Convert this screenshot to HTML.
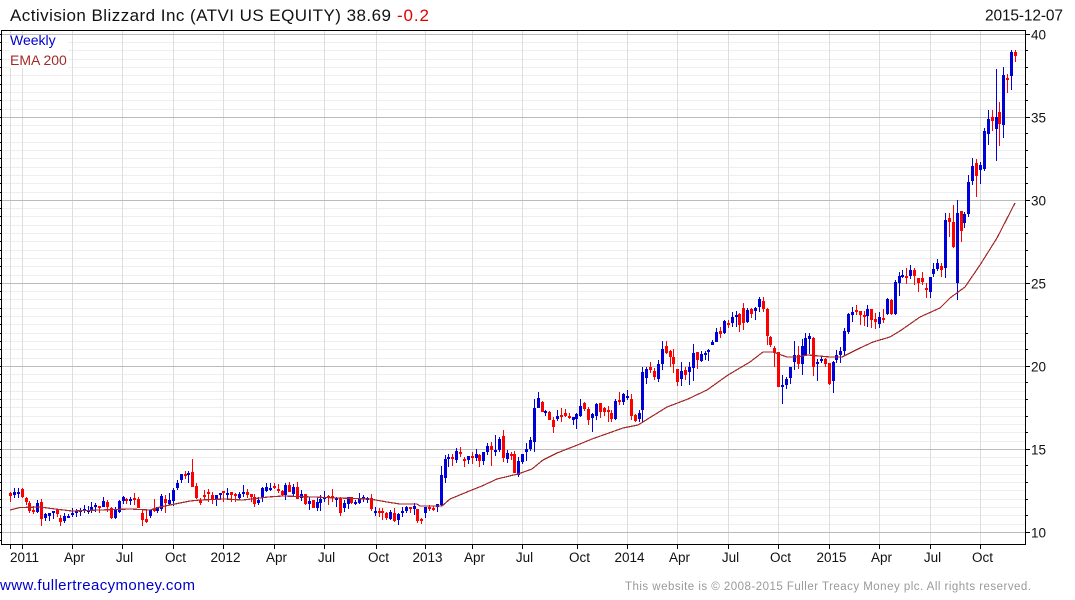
<!DOCTYPE html>
<html lang="en">
<head>
<meta charset="utf-8">
<title>Activision Blizzard Inc (ATVI US EQUITY)</title>
<style>
html,body{margin:0;padding:0;background:#fff;width:1075px;height:600px;overflow:hidden}
svg{display:block;position:absolute;left:0;top:0}
text{font-family:"Liberation Sans",Arial,sans-serif}
</style>
</head>
<body>
<svg id="c" width="1075" height="600" viewBox="0 0 1075 600" xmlns="http://www.w3.org/2000/svg">
<g id="grid" shape-rendering="crispEdges"></g>
<rect x="10" y="36" width="58" height="32" fill="#fff"/>
<path id="blue" fill="#0000d8" shape-rendering="crispEdges" d=""/>
<path id="red" fill="#ff0000" shape-rendering="crispEdges" d=""/>
<polyline fill="none" stroke="#a52a2a" stroke-width="1.2" shape-rendering="crispEdges" points="10,510 20,507.5 40,507 55,509 72,511 100,510 130,509 150,510 160,507 190,501 200,500 225,499 243,500 268,497 283,496 313,497 338,498 370,499 387,502 400,504 417,504 420,506 442,506 450,499 467,492 482,486 497,479 518,474 532,469 543,460 557,453 580,444 592,439 623,428 638,425 667,407 688,399 707,390 728,375 750,362 763,352 773,352 787,357 797,357 808,355 830,357 842,357 860,348 873,342 890,337 900,331 910,324 920,317 940,308 950,298 965,287 980,265 997,238 1015,203"/>
<g id="frame" shape-rendering="crispEdges"></g>
<text x="10" y="21" font-size="17" fill="#111" textLength="381" lengthAdjust="spacing">Activision Blizzard Inc (ATVI US EQUITY) 38.69</text>
<text x="397" y="21" font-size="17" fill="#e00000" textLength="32" lengthAdjust="spacing">-0.2</text>
<text x="985" y="20.5" font-size="15.5" fill="#111" textLength="78" lengthAdjust="spacing">2015-12-07</text>
<text x="10" y="45" font-size="14" fill="#0000cc">Weekly</text>
<text x="10" y="65" font-size="14" fill="#a52a2a">EMA 200</text>
<g font-size="13.5" fill="#111">
<text x="1031" y="39.5">40</text>
<text x="1031" y="122.5">35</text>
<text x="1031" y="205.5">30</text>
<text x="1031" y="288.5">25</text>
<text x="1031" y="371.5">20</text>
<text x="1031" y="454.5">15</text>
<text x="1031" y="537.5">10</text>
</g>
<g font-size="13.5" fill="#111" text-anchor="middle">
<text x="24.5" y="562">2011</text>
<text x="74.5" y="562">Apr</text>
<text x="124.5" y="562">Jul</text>
<text x="175.5" y="562">Oct</text>
<text x="225.5" y="562">2012</text>
<text x="276.5" y="562">Apr</text>
<text x="326.5" y="562">Jul</text>
<text x="378.5" y="562">Oct</text>
<text x="427.5" y="562">2013</text>
<text x="474.5" y="562">Apr</text>
<text x="524.5" y="562">Jul</text>
<text x="579.5" y="562">Oct</text>
<text x="629.5" y="562">2014</text>
<text x="679.5" y="562">Apr</text>
<text x="730.5" y="562">Jul</text>
<text x="780.5" y="562">Oct</text>
<text x="831.5" y="562">2015</text>
<text x="881.5" y="562">Apr</text>
<text x="932.5" y="562">Jul</text>
<text x="982.5" y="562">Oct</text>
</g>
<text x="0" y="590" font-size="15" fill="#0000cc" textLength="195" lengthAdjust="spacing">www.fullertreacymoney.com</text>
<text x="625" y="590" font-size="11.5" fill="#999" textLength="406" lengthAdjust="spacing">This website is © 2008-2015 Fuller Treacy Money plc. All rights reserved.</text>
</svg>
<script>
(function(){
var gx=[10,22,72,122,173,223,274,324,376,425,472,522,577,627,677,728,778,829,879,930,980];
var s='';
function line(x1,y1,x2,y2,c){s+='<line x1="'+x1+'" y1="'+y1+'" x2="'+x2+'" y2="'+y2+'" stroke="'+c+'" stroke-width="1"/>';}
function ry(i){return Math.floor(34.3+i*8.3)+0.5;}
var i,y;
for(i=0;i<=60;i++){y=ry(i);if(i%10)line(2,y,1025,y,'#eeeeee');}
gx.forEach(function(x){line(x+.5,31,x+.5,544,'#dddddd');});
for(i=0;i<=60;i+=10){y=ry(i);line(2,y,1025,y,'#bbbbbb');}
document.getElementById('grid').innerHTML=s;
s='';
line(1.5,30.5,1025.5,30.5,'#000');
line(1.5,30,1.5,545,'#000');
line(1025.5,30,1025.5,545,'#000');
line(1.5,544.5,1025.5,544.5,'#000');
for(i=0;i<=61;i++){y=ry(i);if(y<544)line(0,y,1,y,'#000');if(i%2==0&&y<544)line(1026,y,i%10==0?1030:1028,y,'#000');}
gx.forEach(function(x){line(x+.5,545,x+.5,549,'#000');});
document.getElementById('frame').innerHTML=s;
var groups=[
[0,450,"r125,155,128,138 b113,143,125,135 b113,143,125,128 r115,143,117,140 r140,165,143,155 r152,188,160,183 r168,193,180,185 b150,190,158,185 r148,228,156,207 b190,212,192,205 b190,212,190,198 b183,207,183,186 r178,200,180,192 r195,228,203,215 b190,220,197,212 b192,205,197,198 b175,200,190,195 b177,200,183,187 b175,198,180,187 b165,190,178,183 b168,192,180,182 b155,190,170,180 b160,185,165,172 r168,188,168,175 b142,170,152,170 r150,185,155,172 r172,208,175,205 b172,208,178,203 b150,188,153,185 b138,162,142,152 r145,162,147,150 b142,165,148,150 r130,165,145,150 r142,175,147,173 r180,228,188,210 r180,218,207,215 b180,205,180,198 r148,185,177,180 b170,190,172,182 b132,182,138,178 r135,188,148,158 b128,165,150,162 b115,168,120,152 b90,120,98,113 b72,100,73,90 r62,88,71,73 b62,98,68,73 r28,112,67,110 r100,148,108,145 r145,165,150,158 r120,150,135,137 r118,155,125,132 r125,162,135,150 b135,168,135,148 b128,148,130,135 r122,155,122,130 b115,150,130,132 r125,155,125,135 r128,155,132,138 b125,150,132,145 b105,140,127,130 r118,145,125,135 r132,155,132,142 r132,170,140,162 b140,165,150,158 b112,155,113,145 b100,125,112,122 b98,122,114,117 r100,118,108,110 r102,130,117,123 r120,138,122,135 b100,150,105,135 r97,125,105,125 b102,138,112,132 r97,148,112,148"],
[75,440,"b150,183,162,173 r162,195,162,191 b170,210,183,192 r180,205,180,205 b175,212,185,205 b165,213,178,190 b152,187,170,175 r165,195,169,172 r147,185,169,172 b172,200,175,177 r172,228,175,220 b180,215,190,205 b170,208,172,193 r172,192,172,190 b180,195,186,188 b160,192,175,188 b165,187,172,177 b172,188,175,177 r162,213,175,208 b200,228,212,214 r205,230,212,214 r203,240,212,216 r215,240,218,235 b210,240,215,236 r203,245,220,242 b220,255,222,240"],
[101,380,"b380,410,392,395 b378,398,380,393 r380,398,381,385 b370,405,378,388 r388,430,388,422 r415,432,417,419 b380,415,380,398 r375,393,380,387 r378,392,383,385 b372,395,372,382 b258,378,285,375 b225,310,236,295 b222,262,232,235 r222,257,232,235 b205,250,212,240 r202,232,215,220 r232,262,236,238 b228,252,228,240 r215,252,228,233 b208,242,222,235 r222,262,226,242 b215,255,215,242 b190,225,197,215 r185,258,197,210 b165,228,210,212 b172,215,178,210 r150,245,168,233 b210,250,218,238 r215,240,222,226 r212,280,222,280 b230,292,242,285 b222,252,222,245 b190,242,207,215 b170,212,180,207 b58,215,85,185 b37,85,55,85 r62,97,65,95 b90,107,93,95 r92,120,95,120 r112,158,120,142 b90,122,108,117"],
[142,310,"r295,335,315,317 r297,320,310,317 r310,328,317,322 b320,345,320,330 b310,357,312,327 b267,322,288,318 r277,303,280,297 r290,345,297,330 b310,365,312,325 b280,330,282,318 r278,325,280,305 r292,318,295,305 r288,335,300,305 r300,335,310,327 b268,330,272,327 r247,285,270,275 b250,285,252,275 b240,270,258,263 r252,330,267,317 r312,335,315,332 b300,335,310,328 b170,335,186,300 b172,222,178,205 r155,190,172,180 r175,210,183,200 b150,215,162,208 b92,180,118,162 r93,132,108,130 r120,170,123,142 r118,190,142,162 r178,228,178,215 b155,228,182,207 r172,210,180,195 b155,225,170,187 b102,212,130,173 r125,178,127,150 b122,155,132,153 b122,150,130,133 b118,152,120,124"],
[181,285,"b165,180,170,180 b130,165,140,170 r125,160,138,147 b105,148,108,143 r105,130,115,118 b82,125,95,113 b78,125,90,97 r85,140,87,120 r55,135,70,115 b70,115,75,110 r68,100,72,87 b65,105,68,77 b35,80,42,67 r35,80,48,72"],
[195,270,"r115,225,118,197 r197,232,202,225 r228,290,233,250 r247,352,247,350 b315,402,345,347 b320,358,328,345 b290,342,292,325 b212,300,255,275 r228,297,255,282 b208,315,228,283 b190,252,205,255 b188,253,198,207 r202,318,204,290 b268,332,275,282 b260,280,267,269 r265,290,267,282 r278,345,280,342 b272,368,275,332 b240,280,255,270 b230,278,243,255 b175,258,183,243 b130,192,132,185 b110,155,125,135 r105,135,120,122 r122,165,123,135 r122,168,135,137 b105,170,118,137 r118,175,118,150 r130,178,148,155 b125,175,142,162 r118,160,145,147"],
[226,255,"b130,180,133,178 r133,180,135,178 b75,180,80,178 b50,122,62,83 b45,70,60,65 r38,87,62,68 b30,72,45,62 r40,90,45,62 r68,110,70,83 r50,90,70,80 r85,128,98,100 b65,128,67,112"],
[238,180,"b250,290,268,282 b238,272,250,268 r250,290,258,270 b100,293,120,263 r100,170,115,125 r75,205,127,200 b60,360,100,308 r93,185,93,152 b97,143,102,128 b-15,110,5,102"],
[248,0,"b475,555,498,543 r478,591,490,528 b485,552,495,510 b385,513,393,507 b330,435,357,402 r330,393,350,362 b207,483,352,387 r305,438,337,372 b200,413,225,375 r222,278,233,240 b150,270,155,228 r150,185,155,168"]
];
var d={b:'',r:''};
groups.forEach(function(g){
  g[2].split(' ').forEach(function(t,k){
    var c=t.charAt(0),v=t.slice(1).split(',').map(function(n){return Math.round(g[1]+(+n)/3);});
    var idx=g[0]+k;
    var x=Math.round(10+3.88*idx);
    var w1=v[0],w2=Math.max(v[1],v[0]+1),b1=v[2],b2=Math.max(v[3],v[2]+2);
    d[c]+='M'+x+' '+w1+'h1V'+w2+'h-1zM'+(x-1)+' '+b1+'h3V'+b2+'h-3z';
  });
});
document.getElementById('blue').setAttribute('d',d.b);
document.getElementById('red').setAttribute('d',d.r);
})();
</script>
</body>
</html>
